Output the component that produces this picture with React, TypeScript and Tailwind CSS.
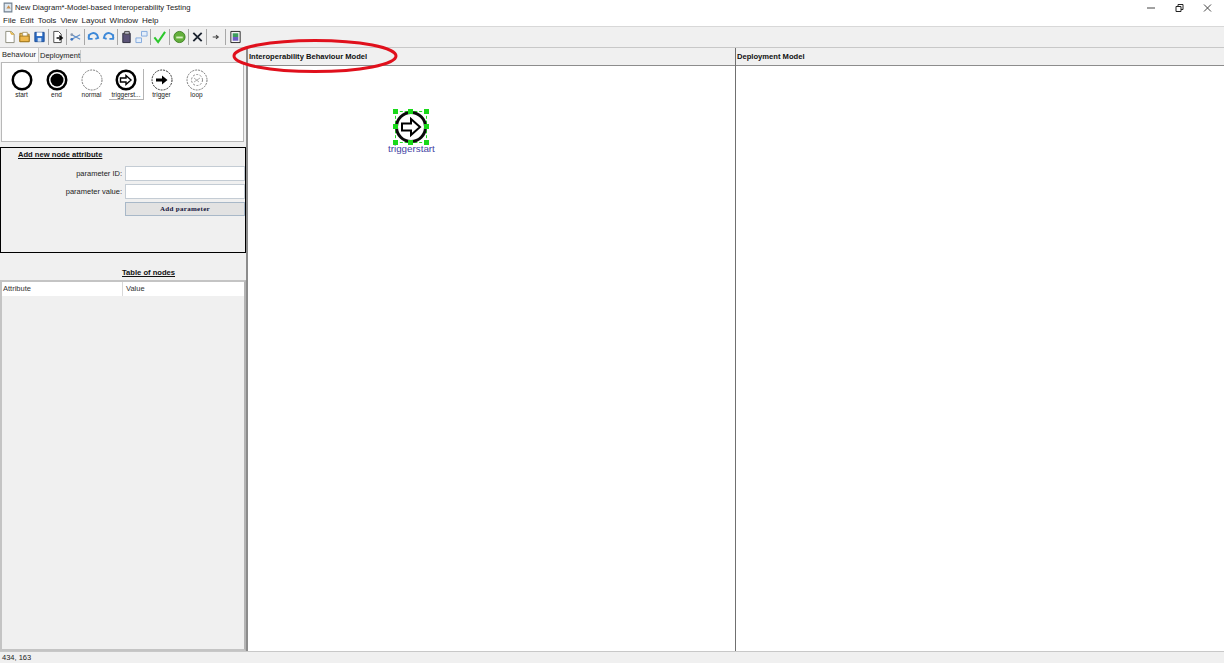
import React from "react";

const MENUS = ["File", "Edit", "Tools", "View", "Layout", "Window", "Help"];

const Sep = ({ wide }: { wide?: boolean }) => (
  <div className={`h-[16px] w-px bg-[#a8a8a8] ${wide ? "mx-[1px]" : ""}`} />
);

function ToolIcon({ children }: { children: React.ReactNode }) {
  return (
    <svg width="13" height="14" viewBox="0 0 14 14" className="shrink-0">
      {children}
    </svg>
  );
}

function Toolbar() {
  return (
    <div className="flex h-[21px] items-center gap-[2px] border-b border-[#c8c8c8] bg-[#f0f0f0] pl-[3px]">
      <ToolIcon>
        <path d="M3 1h6l3 3v9H3z" fill="#fff" stroke="#8c8c7c" />
        <path d="M8 1l1 3h3" fill="#f4d774" stroke="#d4a030" />
      </ToolIcon>
      <ToolIcon>
        <path d="M2 3h4l1 1h5v8H2z" fill="#e8c060" stroke="#a07820" />
        <path d="M5 2h5v7H5z" fill="#fff" stroke="#b0a070" />
        <path d="M2 6h10v6H2z" fill="#eeb84c" stroke="#a07820" />
      </ToolIcon>
      <ToolIcon>
        <path d="M2 2h10v10H2z" fill="#2c6cc4" stroke="#1c4c94" />
        <path d="M4 2h6v4H4z" fill="#fff" />
        <path d="M5 8h4v4H5z" fill="#cfe0f4" />
      </ToolIcon>
      <Sep />
      <ToolIcon>
        <path d="M3 1h5l3 3v9H3z" fill="#fff" stroke="#444" />
        <path d="M6 8h6M9 5.5L12 8l-3 2.5" fill="none" stroke="#111" strokeWidth="1.6" />
      </ToolIcon>
      <Sep />
      <ToolIcon>
        <path d="M3 4.5l9 5M3 9.5l9-5" stroke="#5c8cc8" strokeWidth="1.2" />
        <circle cx="3" cy="4.5" r="1.5" fill="#8a9ab0" />
        <circle cx="3" cy="9.5" r="1.5" fill="#3c74c0" />
      </ToolIcon>
      <Sep />
      <ToolIcon>
        <path d="M2 9a5 5 0 0 1 9-4l1 3-3 1M2 4v5h4" fill="none" stroke="#3c88d8" strokeWidth="2" />
      </ToolIcon>
      <ToolIcon>
        <path d="M12 9a5 5 0 0 0-9-4L2 8l3 1M12 4v5H8" fill="none" stroke="#3c88d8" strokeWidth="2" />
      </ToolIcon>
      <Sep />
      <ToolIcon>
        <path d="M3 3h8v10H3z" fill="#5c5478" stroke="#2c2c3c" />
        <path d="M5 1h5v3H5z" fill="#b8b8c4" stroke="#444" />
      </ToolIcon>
      <ToolIcon>
        <path d="M7 1h6v5H7zM1 8h6v5H1z" fill="#e4eefa" stroke="#80a8dc" />
      </ToolIcon>
      <Sep />
      <ToolIcon>
        <path d="M1.5 7.5l4 5L13 1.5" fill="none" stroke="#2cc82c" strokeWidth="2.2" />
      </ToolIcon>
      <Sep wide />
      <ToolIcon>
        <circle cx="7" cy="7" r="6" fill="#64b03c" stroke="#3c8024" />
        <path d="M3.5 7.5h7" stroke="#d8f0c0" strokeWidth="2" />
      </ToolIcon>
      <Sep />
      <ToolIcon>
        <path d="M2.5 2.5l9 9M11.5 2.5l-9 9" stroke="#1c2430" strokeWidth="2" />
      </ToolIcon>
      <Sep />
      <ToolIcon>
        <path d="M4 7h6M7.5 5L10 7l-2.5 2" fill="none" stroke="#444" strokeWidth="1.2" />
      </ToolIcon>
      <Sep wide />
      <ToolIcon>
        <path d="M2 1h10v12H2z" fill="#f4f4f4" stroke="#222" />
        <path d="M4 3h6v4H4z" fill="#3c9c5c" />
        <path d="M4 7h6v4H4z" fill="#6c5cc4" />
      </ToolIcon>
    </div>
  );
}

function Circle({
  children,
  stroke = 2.5,
  dark = "#000",
  dash,
}: {
  children?: React.ReactNode;
  stroke?: number;
  dark?: string;
  dash?: string;
}) {
  return (
    <svg width="22" height="22" viewBox="0 0 22 22">
      <circle cx="11" cy="11" r={10 - stroke / 2 + 0.5} fill="#fff" stroke={dark} strokeWidth={stroke} strokeDasharray={dash} />
      {children}
    </svg>
  );
}

function PaletteItem({ label, selected, children }: { label: string; selected?: boolean; children: React.ReactNode }) {
  return (
    <div
      className={`flex h-[31px] w-[35px] flex-col items-center ${
        selected ? "border-r border-b border-[#b4b4b4]" : ""
      }`}
    >
      {children}
      <span className="whitespace-nowrap text-[6.5px] leading-[8px] text-[#222]">{label}</span>
    </div>
  );
}

function Palette() {
  return (
    <div className="mx-[1px] h-[80px] w-[243px] border border-[#b8b8b8] bg-white pt-[6px] pl-[2px]">
      <div className="flex">
        <PaletteItem label="start">
          <Circle />
        </PaletteItem>
        <PaletteItem label="end">
          <Circle>
            <circle cx="11" cy="11" r="6.5" fill="#000" />
          </Circle>
        </PaletteItem>
        <PaletteItem label="normal">
          <Circle stroke={1} dark="#7a7a7a" dash="2 1" />
        </PaletteItem>
        <PaletteItem label="triggerst..." selected>
          <Circle>
            <path d="M5.5 9h5.5V6.5l5 4.5-5 4.5V13H5.5z" fill="#fff" stroke="#000" strokeWidth="1.4" />
          </Circle>
        </PaletteItem>
        <PaletteItem label="trigger">
          <Circle stroke={1} dark="#333" dash="2 1">
            <path d="M5 9.5h6V6.5l5.5 4.5-5.5 4.5v-3H5z" fill="#000" />
          </Circle>
        </PaletteItem>
        <PaletteItem label="loop">
          <Circle stroke={1} dark="#777" dash="2 1">
            <circle cx="11" cy="11" r="5.5" fill="none" stroke="#888" strokeWidth="1" strokeDasharray="2 1.5" />
            <path d="M8 13l6-4M8 9l5 4" stroke="#999" strokeWidth="0.8" />
          </Circle>
        </PaletteItem>
      </div>
    </div>
  );
}

function FormPanel() {
  return (
    <div className="mt-[5px] h-[106px] w-[246px] border border-black bg-[#f0f0f0]">
      <div className="mt-[2px] ml-[17px] text-[7.6px] leading-[10px] font-bold text-[#111] underline">
        Add new node attribute
      </div>
      <div className="mt-[6px] flex flex-col gap-[3px]">
        {["parameter ID:", "parameter value:"].map((label) => (
          <div key={label} className="flex items-center justify-end">
            <span className="mr-[3px] text-[7.5px] text-[#222]">{label}</span>
            <div className="h-[15px] w-[120px] border border-[#c4ccd4] bg-white" />
          </div>
        ))}
      </div>
      <div className="mt-[3px] ml-[124px] flex h-[14px] w-[120px] items-center justify-center border border-[#a8b8c8] bg-[#e2e2e2] font-['Liberation_Serif'] text-[7px] font-bold tracking-[0.3px] text-[#14143c]">
        Add parameter
      </div>
    </div>
  );
}

function NodeTable() {
  return (
    <div className="flex min-h-0 flex-1 flex-col">
      <div className="mt-[15px] ml-[122px] text-[7.6px] leading-[10px] font-bold text-[#111] underline">
        Table of nodes
      </div>
      <div className="mt-[2px] flex flex-1 flex-col border-2 border-[#c4c4c4] border-r-[#b4b4b4] bg-[#f0f0f0]">
        <div className="flex h-[14px] items-center bg-white text-[7.5px] text-[#333]">
          <div className="flex h-full w-[121px] items-center border-r border-[#d8d8d8] pl-[1px]">Attribute</div>
          <div className="pl-[3px]">Value</div>
        </div>
      </div>
    </div>
  );
}

function Canvas({ title, className }: { title: string; className: string }) {
  return (
    <div className={`flex flex-col ${className}`}>
      <div className="flex h-[18px] items-center border-b border-[#8c8c8c] bg-[#f0f0f0] pl-px text-[7.6px] font-bold text-[#111]">
        {title}
      </div>
      <div className="flex-1 bg-white" />
    </div>
  );
}

const HANDLES = [
  "left-0 top-0",
  "left-[15px] top-0",
  "left-[31px] top-0",
  "left-0 top-[15px]",
  "left-[31px] top-[15px]",
  "left-0 top-[31px]",
  "left-[15px] top-[31px]",
  "left-[31px] top-[31px]",
];

// the node sits on the diagram canvas, so it is placed by coordinates
function DiagramNode() {
  return (
    <div className="absolute top-[109px] left-[393px] h-[48px] w-[36px]">
      <div className="absolute top-[2px] left-[2px] h-[32px] w-[32px] border border-dashed border-[#22dd22]" />
      <svg width="32" height="32" viewBox="0 0 32 32" className="absolute top-[2px] left-[2px]">
        <circle cx="16" cy="16" r="14.5" fill="#fff" stroke="#0a0a0a" strokeWidth="3" />
        <path d="M7 12.5h9V8l9 8-9 8v-4.5H7z" fill="#fff" stroke="#000" strokeWidth="2" />
      </svg>
      {HANDLES.map((pos) => (
        <div key={pos} className={`absolute h-[5px] w-[5px] bg-[#19d919] ${pos}`} />
      ))}
      <div className="absolute top-[35px] left-[-5px] whitespace-nowrap text-[9.8px] leading-[10px] text-[#4444a4]">
        triggerstart
      </div>
    </div>
  );
}

export default function App() {
  return (
    <div className="relative flex h-[663px] w-[1224px] flex-col overflow-hidden bg-[#f0f0f0] font-['Liberation_Sans',sans-serif]">
      {/* window chrome */}
      <div className="flex h-[15px] items-center bg-white pl-[3px]">
        <svg width="10" height="11" viewBox="0 0 9 10" className="mr-[2px]">
          <path d="M1 1h7v8H1z" fill="#dfe8f0" stroke="#708090" />
          <path d="M3 6l2-3 2 3z" fill="#c89050" />
        </svg>
        <span className="text-[7.7px] text-[#222]">New Diagram*-Model-based Interoperability Testing</span>
        <div className="ml-auto flex items-center text-[#333]">
          <svg width="94" height="14" viewBox="0 0 94 14">
            <path d="M17 7h8" stroke="#444" />
            <path d="M46 5.5h5v5h-5zM48 5.5V3.5h5v5h-2" fill="none" stroke="#222" />
            <path d="M74 3.5l7 7M81 3.5l-7 7" stroke="#444" />
          </svg>
        </div>
      </div>
      <div className="flex h-[12px] items-center gap-[4px] border-b border-[#d8d8d8] bg-white pl-[3px] text-[8px] text-[#222]">
        {MENUS.map((m) => (
          <span key={m}>{m}</span>
        ))}
      </div>
      <Toolbar />

      <div className="flex min-h-0 flex-1">
        <div className="flex w-[246px] flex-col">
          <div className="flex h-[14px] items-end gap-[1px] text-[7.5px] text-[#222]">
            <div className="flex h-[14px] w-[39px] items-center justify-center border-r border-[#c8c8c8] bg-[#fafafa]">
              Behaviour
            </div>
            <div className="flex h-[12px] w-[41px] items-center justify-center border-r border-[#c8c8c8]">
              Deployment
            </div>
          </div>
          <Palette />
          <FormPanel />
          <NodeTable />
        </div>
        <div className="w-[2px] bg-[#8c8c8c]" />
        <Canvas title="Interoperability Behaviour Model" className="w-[488px] border-r border-[#707070]" />
        <Canvas title="Deployment Model" className="flex-1" />
      </div>

      <div className="flex h-[12px] items-center border-t border-[#c8c8c8] pl-[2px] text-[7.5px] text-[#222]">434, 163</div>

      <DiagramNode />
      {/* red annotation drawn over the screenshot */}
      <svg width="170" height="36" viewBox="0 0 170 36" className="absolute top-[38px] left-[232px]">
        <ellipse cx="83" cy="18" rx="81" ry="15.5" fill="none" stroke="#e0101c" strokeWidth="3" />
      </svg>
    </div>
  );
}
